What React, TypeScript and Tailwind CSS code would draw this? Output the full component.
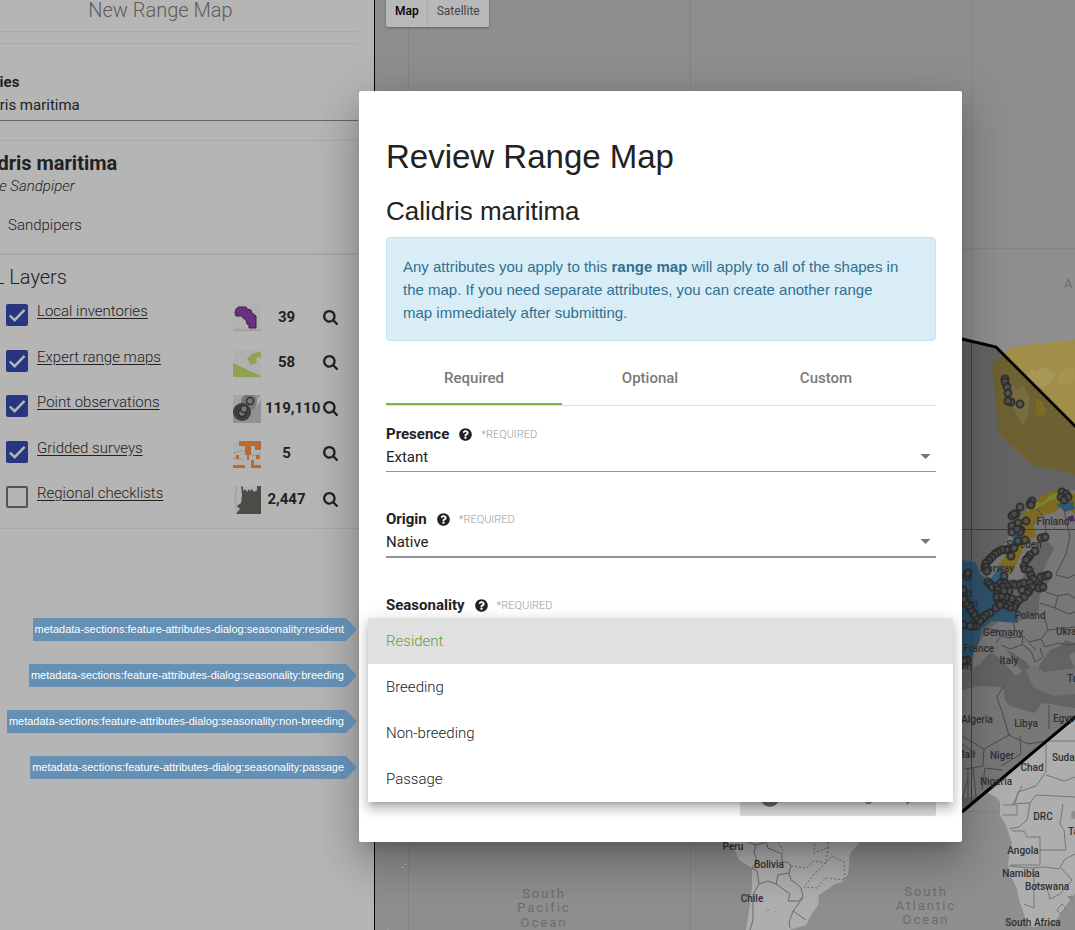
import React from "react";
import { FaQuestionCircle, FaCheckCircle } from "react-icons/fa";

const landDark = "#777777";
const landLight = "#aeaeae";

const points: [number, number][] = [
  [1005, 379], [1005, 382], [1007, 387], [1008, 393], [1011, 402], [1008, 401], [1020, 404],
  [1062, 492], [1066, 494], [1068, 497], [1061, 497], [1064, 500], [1032, 501], [1030, 504], [1031, 505],
  [1020, 507], [1016, 514], [1012, 516], [1014, 514], [1026, 521], [1018, 523], [1012, 526], [1021, 530],
  [1012, 532], [1020, 532], [1017, 529], [1018, 541], [1025, 540], [1041, 538], [1045, 537], [1035, 551],
  [1030, 555], [1028, 558], [1026, 560], [1024, 566], [1025, 569], [1014, 548], [1008, 549], [1006, 550],
  [1002, 550], [998, 552], [995, 554], [992, 557], [989, 560], [986, 563], [986, 567], [987, 571],
  [1011, 556], [988, 582], [990, 584], [992, 587], [997, 586], [1004, 576], [1001, 583], [1005, 583],
  [1007, 586], [1003, 587], [998, 590], [997, 594], [1009, 591], [1013, 584], [1016, 585], [1020, 584],
  [1024, 583], [1029, 570], [1031, 575], [1033, 579], [1030, 583], [1032, 587], [1029, 591], [1027, 593],
  [1024, 597], [1019, 600], [1016, 604], [1014, 607], [1010, 607], [1006, 605], [1002, 603], [998, 600],
  [997, 597], [1005, 600], [1010, 602], [1012, 599], [1006, 597], [996, 608], [990, 613], [986, 615],
  [983, 618], [980, 621], [976, 626], [973, 626], [970, 626], [976, 617], [974, 614], [971, 610],
  [969, 606], [966, 603], [964, 599], [967, 576], [968, 573], [963, 625], [1040, 585], [1039, 588],
  [1043, 587], [1041, 577], [1045, 576], [1048, 575], [967, 660], [964, 661],
  [1002, 596], [1004, 591], [1000, 605], [1022, 590], [963, 590],
];

type Anchor = "start" | "middle" | "end";
const labels: [string, number, number, Anchor][] = [
  ["Finland", 1053, 525, "middle"], ["Sweden", 1024, 548, "middle"], ["Norway", 997, 572, "middle"],
  ["United", 972, 597, "end"], ["Kingdom", 978, 607, "end"], ["Poland", 1030, 619, "middle"],
  ["Germany", 1003, 636, "middle"], ["France", 979, 652, "middle"], ["Ukraine", 1056, 635, "start"],
  ["Italy", 1009, 664, "middle"], ["Spain", 972, 670, "end"], ["Turkey", 1067, 682, "start"],
  ["Algeria", 977, 723, "middle"], ["Libya", 1026, 727, "middle"], ["Egypt", 1053, 722, "start"],
  ["Mali", 975, 758, "end"], ["Niger", 1002, 759, "middle"], ["Sudan", 1052, 761, "start"],
  ["Chad", 1032, 771, "middle"], ["Nigeria", 996, 785, "middle"], ["DRC", 1043, 820, "middle"],
  ["Angola", 1023, 854, "middle"], ["Tanzania", 1068, 835, "start"], ["Namibia", 1021, 877, "middle"],
  ["Botswana", 1047, 890, "middle"], ["South Africa", 1033, 926, "middle"],
  ["Peru", 733, 850, "middle"], ["Bolivia", 769, 868, "middle"], ["Chile", 752, 902, "middle"],
];

const oceans: [string, number, number][] = [
  ["South", 544, 898], ["Pacific", 544, 912], ["Ocean", 544, 927],
  ["South", 926, 896], ["Atlantic", 926, 910], ["Ocean", 926, 924],
  ["Arctic", 1087, 288],
];

function WorldMap() {
  return (
    <svg className="absolute inset-0 h-full w-full" viewBox="375 0 700 930" preserveAspectRatio="xMinYMin slice" aria-label="World map">
      <rect x="375" y="0" width="1400" height="1400" fill="#8e8e8e" />
      <g stroke="#858585" strokeWidth="1">
        <path d="M408.500 0V930M690.500 0V930M971.500 0V345M962 248.500H1075M962 811.500H1075" fill="none" />
      </g>

      {/* South America */}
      <path d="M728 842L735 851 739 860 752 868 752 888 750 905 746 930H789L796 928 806 925 811 915 818 905 819 895 828 889 835 884 843 882 848 874 850 853 860 842Z" fill={landLight} />
      <g fill="none" stroke="#6b6b6b">
        <path d="M748 842L756 845 754 852 757 861 752 868 757 871 759 884 768 881 776 884 778 875 789 873 791 866 788 862 782 862 782 854 768 848 766 842 756 845M759 884L753 895 753 920 750 930M776 884L790 894 788 901 799 901 803 896 801 888 797 884 791 880 789 873M803 898L793 911 789 922 790 928M793 911L806 920" />
        <path d="M791 866L806 868 814 861 826 863 828 847 814 853 815 842M826 863L816 872 804 887 818 888 825 878 845 880 844 862 832 856 826 863M778 842L784 853 M828 842V847" strokeDasharray="2 2" />
      </g>
      <path d="M766 911l3-2v2zM774 911l3 1-1 1z" fill="#8a8a8a" />
      <path d="M400 868l4-2v2zM404 865l3-2v2zM387 929l3 1h-3z" fill="#aeaeae" />

      {/* southern Africa outside the range */}
      <path d="M987 793L1075 717V893L1066 906 1057 919 1045 924 1033 927 1027 925 1024 914 1019 900 1017 888 1011 877 1008 866 1010 849 1012 843 1006 825 1000 815 1000 802 996 797Z" fill={landLight} />
      <ellipse cx="1074" cy="815" rx="3" ry="4" fill="#8e8e8e" />

      {/* yellow range outside the boundary */}
      <path d="M1003 354L1012 347 1045 343 1075 340V426Z" fill="#a08e49" />
      <path d="M1026 376l6-8 4 4 8-6 6 6 6 2-4 8-10 6-12-6z" fill="#a8975a" />
      <path d="M1060 372l12-6 3 12-8 8-10-2z" fill="#a69453" />

      {/* shaded region */}
      <path d="M940 336L962 340 996 347 1075 426V717L962 812H940Z" fill="#636363" />
      <path d="M992 365L1003 354 1075 426V475L1068 472 1033 466 999 433Z" fill="#6d6131" />
      <path d="M1008 383l10 6 6-4 6 14-2 16-5 11-7-12-5-12-5-4z" fill="#776b3f" />
      <path d="M1036 399l6 2 5 10-5 6-6-3z" fill="#7d6a24" />

      {/* Europe */}
      <path d="M962 690L980 686 1003 687 1005 700 1010 706 1027 711 1035 713 1042 703 1056 705 1075 708V717L987 793 975 797 962 798Z" fill={landDark} />
      <path d="M973 668L974 652 981 640 990 628 1000 620 1018 621 1038 614 1040 595 1052 578 1042 575 1046 564 1054 548 1044 536 1030 556 1024 575 1020 584 1004 577 990 582 986 566 1003 548 1012 530 1032 503 1052 492 1075 490V668L1064 645 1050 650 1040 664 1036 674 1026 662 1012 652 1006 650 1022 672 1016 676 1002 660 990 652 980 664 962 672V668Z" fill={landDark} />
      <path d="M1033 687L1026 670 1034 665 1044 672 1075 668V694L1054 696 1044 692Z" fill="#727272" />
      <path d="M1057 648l9-8 9 3v9l-8 4-10-1z" fill="#626262" />
      <path d="M998 565L1006 556 1018 545 1014 532 1026 510 1036 500 1050 491 1062 490 1075 494V514L1064 506 1052 513 1040 516 1034 526 1036 536 1026 543 1019 558 1014 570 1004 578 996 572Z" fill="#7d6a22" />
      <path d="M1026 512l8-11 8 2 10-9 14-3-3 5-14 5-11 7z" fill="#78852e" />
      <path d="M1056 504l17-3 2 8-10 3z" fill="#315a72" />
      <path d="M1068 517l5-2 2 6-5 1z" fill="#5b2668" />
      <path d="M962 560L976 562 980 574 988 581 995 594 1004 608 1018 607V623L992 621 982 629 979 642 972 656 962 669Z" fill="#2f526b" />
      <path d="M1014 530l6-9 3 9-3 12-5 9-8 4 4-10zM988 582l14-18 4 10-8 12z" fill="#34617c" />
      <path d="M962 594l10 4 8 14-5 10-13-1z" fill="#284a61" />

      {/* borders */}
      <g fill="none" stroke="#4a4a4a" strokeWidth="1">
        <path d="M996 643l5-7 8 2 6-8-2-8M1001 636l-4-6-8-1M1009 638l14-2 6 6 12-3 7-9-4-15M1023 636l-1 9-12 4-9-4M1041 639l4 8 14-4 6 2 10-1M1036 650l-7-7M1023 645l8 6 4 11 8-5-3-9M1048 630l27-3M1040 590l18 6 10-2 7 4M1058 596l-3 12 14 6 6-2M1040 603l15 5M1037 508l8 12 1 16M1063 505l3 14 4 18-4 17-10 20M1056 575l12 3 7-3" />
        <path d="M1003 687l-6 10 6 18 6 20M1049 705v24M962 736l22 13 25-14 19 9 18-3M984 749l-1 17-18 3M1020 736l1 18-20 12M985 768l17 2M962 800l6-22M976 797l-3-30M982 790l3-22M968 768v30M962 744l14 10" />
      </g>
      <g fill="none" stroke="#767676" strokeWidth="1">
        <path d="M1047 741h28M1046 741v31l-10 14-18 6-3 12M1046 775l18 6 11-4M1012 804l18-1 6-8 39 2M1003 805h14v10h-14M1030 803l-3 17-8 7-10 2M1012 831h12l3 6h13v28h-30M1040 850h26l-2-20-4-6 3-20M1009 866l22 2 14-1 14 2 6-10 10-5M1034 868v40l-10-4M1034 885h12l4 14 10-5 12-14-11-12M1022 786l-9 18" />
        <path d="M1057 910l5-6 4 4-6 6zM1068 897l4-1v4z" />
      </g>
      <path d="M971.500 342V805M962 529.500H1075" stroke="#3f3f3f" strokeWidth="1" />
      <path d="M958 338L962 339 996 347 1080 431M1080 713L962 812" fill="none" stroke="#000" strokeWidth="3" />

      <g fontFamily="Roboto, sans-serif" fontSize="10" fontWeight="500" fill="#303030">
        {labels.map(([t, x, y, a]) => (
          <text key={t} x={x} y={y} textAnchor={a}>{t}</text>
        ))}
      </g>
      <g fill="#505050" fillOpacity="0.8" stroke="#2a2a2a" strokeOpacity="0.85" strokeWidth="2">
        {points.map(([x, y], i) => (
          <circle key={i} cx={x} cy={y} r="3.500" />
        ))}
      </g>
      <g fontFamily="Roboto, sans-serif" fontSize="13" letterSpacing="2" fill="#6c6c6c" textAnchor="middle">
        {oceans.map(([t, x, y], i) => (
          <text key={i} x={x} y={y}>{t}</text>
        ))}
      </g>
    </svg>
  );
}

function SearchIcon() {
  return (
    <svg className="h-[15px] w-[15px]" viewBox="0 128 1664 1664" fill="currentColor" aria-hidden="true">
      <path d="M1152 832q0-185-131.500-316.500t-316.500-131.500-316.500 131.500-131.500 316.500 131.500 316.500 316.500 131.500 316.500-131.500 131.500-316.500zm512 832q0 52-38 90t-90 38q-54 0-90-38l-343-342q-179 124-399 124-143 0-273.500-55.500t-225-150-150-225-55.500-273.500 55.500-273.500 150-225 225-150 273.500-55.500 273.500 55.500 225 150 150 225 55.500 273.500q0 220-124 399l343 343q37 37 37 90z" />
    </svg>
  );
}

const thumbs: Record<string, React.ReactNode> = {
  local: (
    <>
      <rect width="28" height="28" fill="#b3b1b0" />
      <path d="M0 25h28v2H0z" fill="#aaa09f" />
      <path d="M5 3h8l1 2 4 1 1 3 4 3v12h-7v-3l-2-1-1-4-3-2-1-2H3L2 9l1-4 2-1z" fill="#6a3180" stroke="#3a2144" />
    </>
  ),
  expert: (
    <>
      <rect width="28" height="28" fill="#b0b1ae" />
      <path d="M0 13l28 13v1H0z" fill="#90a355" />
      <path d="M14 9l5-5 5-2h4v6l-3-1-2 2 1 4-6 2z" fill="#90a355" />
    </>
  ),
  point: (
    <>
      <rect width="28" height="28" fill="#8e9293" />
      <path d="M0 0h14L0 16z" fill="#a5a5a3" />
      <path d="M28 0v4l-5 8-4-1z" fill="#b3b3b1" />
      <circle cx="16" cy="7" r="8" fill="#777" />
      <circle cx="9" cy="17" r="9" fill="#3d3f40" />
      <g fill="#777" stroke="#2f2f2f" strokeWidth="1.500">
        <circle cx="17" cy="6" r="3.500" />
        <circle cx="9" cy="18" r="3.500" />
        <circle cx="11" cy="14" r="3.500" />
      </g>
    </>
  ),
  grid: (
    <>
      <rect width="28" height="28" fill="#b2b1b0" />
      <path d="M0 12l12-3 8 6 8-3M0 17l10 2" stroke="#999" fill="none" />
      <path d="M6 0h22v9h-6V5h-4v9h-2v5h-2v-5h-2V5H6zM3 14h3v4H3zM23 14h4v4h-4zM18 19h3v5h7v3H18zM0 24h12v3H0z" fill="#b56a38" />
    </>
  ),
  regional: (
    <>
      <rect width="28" height="28" fill="#b1b2b2" />
      <path d="M4 0L2 12l3 16" stroke="#8fa0a8" fill="none" />
      <path d="M8 0l2 1v4l2-2 2 3 2-3 1 2 2-2 2 3 3-2V0h4v28H3l4-5-3-3 4-3 1-8z" fill="#4b4b48" />
    </>
  ),
};

const layers = [
  { id: "local", name: "Local inventories", count: "39", on: true },
  { id: "expert", name: "Expert range maps", count: "58", on: true },
  { id: "point", name: "Point observations", count: "119,110", on: true },
  { id: "grid", name: "Gridded surveys", count: "5", on: true },
  { id: "regional", name: "Regional checklists", count: "2,447", on: false },
];

function LayerRow({ id, name, count, on }: (typeof layers)[number]) {
  return (
    <li className="flex h-7 items-start">
      <span className="relative mr-[9px] h-[22px] w-[22px] shrink-0">
        <input
          id={"layer-" + id}
          type="checkbox"
          defaultChecked={on}
          aria-label={name}
          className="block h-[22px] w-[22px] appearance-none rounded-[2px] border-2 border-[#545454] checked:border-[#28357f] checked:bg-[#28357f]"
        />
        {on && (
          <svg className="pointer-events-none absolute inset-0" viewBox="0 0 22 22" fill="none" stroke="#b6b6b6" strokeWidth="2.400" aria-hidden="true">
            <path d="M3.800 11.500L8.600 16.200 18.600 5.800" />
          </svg>
        )}
      </span>
      <a href="#layer" className="text-[15px] leading-[15px] font-light underline underline-offset-2">{name}</a>
      <span className="ml-auto flex h-[26px] items-center">
        <svg className="h-7 w-7 self-start" viewBox="0 0 28 28" aria-hidden="true">{thumbs[id]}</svg>
        <span className="ml-1 w-[43px] text-center text-[15px] font-bold">{count}</span>
        <button type="button" aria-label={"Zoom to " + name} className="ml-[15px]"><SearchIcon /></button>
      </span>
    </li>
  );
}

function Sidebar() {
  return (
    <aside className="w-[375px] shrink-0 overflow-hidden border-r border-black bg-[#b5b5b5] pr-4 text-[#222]">
      <div className="-ml-[37px]">
        <h2 className="border-b border-[#a9a9a9] pb-[11px] text-center text-xl leading-[20px] font-light text-[#5c5c5c]">New Range Map</h2>
        <div className="mt-[11px] border-t border-[#a9a9a9] pt-[27px] pl-[3px]">
          <label htmlFor="species" className="block h-[23px] text-[15px] leading-[23px] font-bold">Species</label>
          <input id="species" defaultValue="Calidris maritima" className="block h-[27px] w-full border-b border-[#666] pb-1 text-[15px] outline-none" />
        </div>
        <section className="mt-[19px] border-t border-b-2 border-t-[#a9a9a9] border-b-[#a6a6a6] pt-[10px] pb-[17px]">
          <h3 className="text-xl leading-6 font-bold">Calidris maritima</h3>
          <p className="pl-[3px] text-[15px] leading-[22px] font-light italic">Purple Sandpiper</p>
          <p className="ml-[45px] pt-[17px] text-[15px] leading-[22px] font-light">Sandpipers</p>
        </section>
        <section className="border-b border-[#a9a9a9] pt-[10px] pb-[14px]">
          <h3 className="text-xl leading-6 font-light">MOL Layers</h3>
          <ul className="mt-[15px] flex h-[210px] flex-col justify-between pr-5 pl-[43px]">
            {layers.map((l) => <LayerRow key={l.id} {...l} />)}
          </ul>
        </section>
      </div>
    </aside>
  );
}

function FieldLabel({ id, text }: { id: string; text: string }) {
  return (
    <div className="flex h-[22px] items-center text-[15px]">
      <label htmlFor={id} className="font-bold">{text}</label>
      <FaQuestionCircle className="ml-[10px] h-[13px] w-[13px]" aria-hidden="true" />
      <span className="ml-[9px] pt-[3px] text-[11px] font-light text-[#999]">*REQUIRED</span>
    </div>
  );
}

function SelectBox({ id, options, thick }: { id: string; options: string[]; thick?: boolean }) {
  return (
    <div className={thick ? "relative border-b-2 border-[#949494]" : "relative border-b border-[#949494]"}>
      <select id={id} className="block h-[26px] w-full appearance-none pb-px text-[15px] outline-none">
        {options.map((o) => <option key={o}>{o}</option>)}
      </select>
      <svg className="pointer-events-none absolute top-[9px] right-[5px] h-[5px] w-[11px]" viewBox="0 0 10 5" fill="#757575" aria-hidden="true">
        <path d="M0 0h10L5 5z" />
      </svg>
    </div>
  );
}

const seasons = ["Resident", "Breeding", "Non-breeding", "Passage"];

function SeasonMenu() {
  return (
    <ul
      role="listbox"
      aria-label="Seasonality"
      className="absolute top-6 -right-[17px] -left-[18px] z-10 bg-white shadow-[0_5px_5px_-3px_rgba(0,0,0,0.2),0_8px_10px_1px_rgba(0,0,0,0.14),0_3px_14px_2px_rgba(0,0,0,0.12)]"
    >
      {seasons.map((s, i) => (
        <li
          key={s}
          role="option"
          aria-selected={i === 0}
          className={
            i === 0
              ? "relative flex h-[46px] items-center bg-[#e0e0e0] px-[18px] text-[15px] font-light text-[#689f38]"
              : "relative flex h-[46px] items-center px-[18px] text-[15px] font-light text-[#222]"
          }
        >
          {s}
          <span className="absolute top-0 right-full mr-[11px] h-[23px] bg-[#4682b4]/72 pr-[13px] pl-[2px] font-['Liberation_Sans',sans-serif] text-[11px] leading-[23px] font-normal whitespace-nowrap text-white [clip-path:polygon(0_0,calc(100%-11px)_0,100%_50%,calc(100%-11px)_100%,0_100%)]">
            metadata-sections:feature-attributes-dialog:seasonality:{s.toLowerCase()}
          </span>
        </li>
      ))}
    </ul>
  );
}

function ReviewDialog() {
  return (
    <div
      role="dialog"
      aria-labelledby="dialog-title"
      className="w-[603px] rounded-[2px] bg-white pt-[46px] pr-[26px] pb-[26px] pl-[27px] text-[#222] shadow-[0_11px_15px_-7px_rgba(0,0,0,0.2),0_24px_38px_3px_rgba(0,0,0,0.14),0_9px_46px_8px_rgba(0,0,0,0.12)]"
    >
      <h1 id="dialog-title" className="font-['Liberation_Sans',sans-serif] text-[33px] leading-10">Review Range Map</h1>
      <h2 className="mt-[18px] font-['Liberation_Sans',sans-serif] text-[26px] leading-8">Calidris maritima</h2>
      <p className="mt-[10px] rounded-[4px] border border-[#bce8f1] bg-[#d9edf7] pt-[17px] pr-[34px] pb-4 pl-4 font-['Liberation_Sans',sans-serif] text-[15px] leading-[23px] text-[#31708f]">
        Any attributes you apply to this <strong>range map</strong> will apply to all of the shapes in the map. If you need separate attributes, you can create another range map immediately after submitting.
      </p>
      <div role="tablist" className="mt-[9px] flex border-b border-[#e0e0e0] text-[15px] font-medium text-[#7a7a7a]">
        <button type="button" role="tab" aria-selected="true" className="h-[55px] w-[176px] border-b-2 border-[#7cb342] pt-[3px]">Required</button>
        <button type="button" role="tab" aria-selected="false" className="h-[55px] w-[176px] border-b-2 border-transparent pt-[3px]">Optional</button>
        <button type="button" role="tab" aria-selected="false" className="h-[55px] w-[176px] border-b-2 border-transparent pt-[3px]">Custom</button>
      </div>
      <div className="flex flex-col gap-9 pt-[17px]">
        <div>
          <FieldLabel id="presence" text="Presence" />
          <SelectBox id="presence" options={["Extant", "Extinct"]} />
        </div>
        <div>
          <FieldLabel id="origin" text="Origin" />
          <SelectBox id="origin" options={["Native", "Introduced"]} thick />
        </div>
        <div className="relative">
          <FieldLabel id="seasonality" text="Seasonality" />
          <SelectBox id="seasonality" options={seasons} />
          <SeasonMenu />
        </div>
      </div>
      <div className="mt-[134px] flex justify-end">
        <button type="button" className="flex h-[39px] w-[196px] items-center rounded-[2px] bg-[#dcdcdc] pl-5 text-[15px] font-medium text-[#6a6a6a]">
          <FaCheckCircle className="mr-[7px] h-5 w-5" aria-hidden="true" />
          Submit Range Map
        </button>
      </div>
    </div>
  );
}

export default function App() {
  return (
    <div className="relative flex min-h-screen overflow-hidden font-[Roboto,sans-serif]">
      <Sidebar />
      <main className="relative flex-1">
        <WorldMap />
        <div className="absolute top-0 left-[11px] flex h-[27px] rounded-b-[2px] bg-[#b8b8b8] text-xs shadow-[0_1px_3px_rgba(0,0,0,0.3)]">
          <button type="button" className="border-r border-[#aaa] px-2 pb-[5px] pl-[9px] font-medium text-black">Map</button>
          <button type="button" className="px-[9px] pb-[5px] text-[#444]">Satellite</button>
        </div>
      </main>
      <div className="absolute inset-0 flex items-start justify-end pt-[91px] pr-[113px]">
        <ReviewDialog />
      </div>
    </div>
  );
}
